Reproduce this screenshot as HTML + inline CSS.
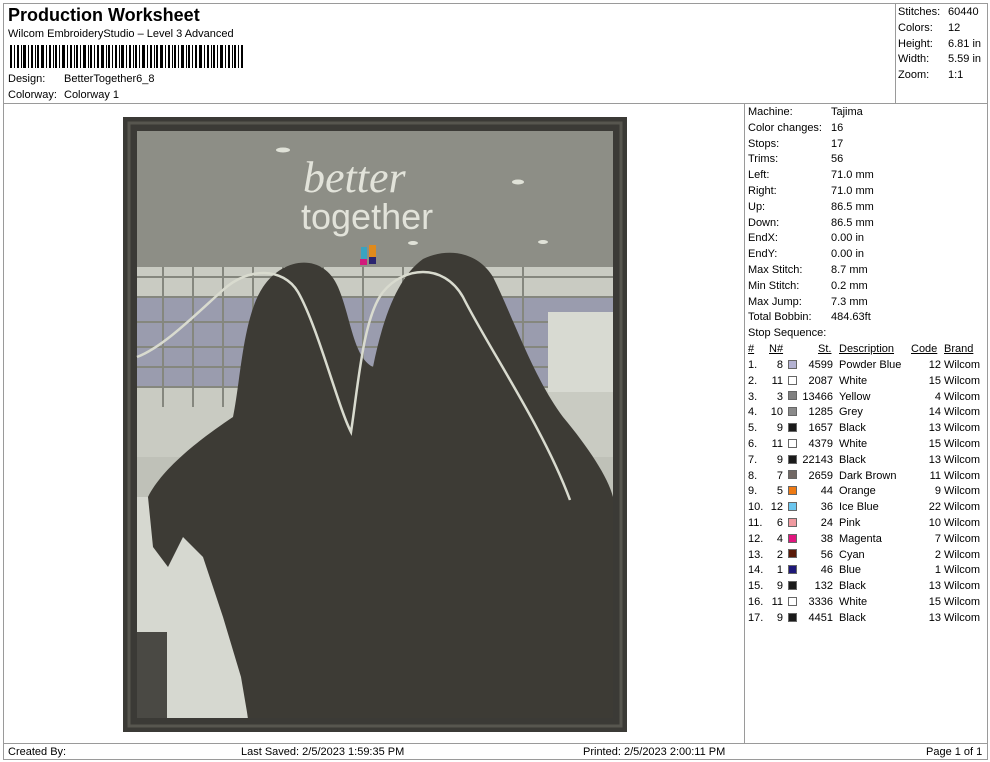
<!DOCTYPE html>
<html><head><meta charset="utf-8"><style>
*{margin:0;padding:0}
body{width:990px;height:762px;background:#fff;position:relative;font-family:"Liberation Sans",Arial,sans-serif;font-size:11px;color:#000;overflow:hidden}
.a{position:absolute;white-space:nowrap}
.l{position:absolute;background:#9a9a9a}
.u{text-decoration:underline}
.sw{position:absolute;width:9px;height:9px;border:1px solid #666;box-sizing:border-box}
</style></head><body>
<div class="l" style="left:3px;top:3px;width:985px;height:1px"></div>
<div class="l" style="left:3px;top:3px;width:1px;height:757px"></div>
<div class="l" style="left:987px;top:3px;width:1px;height:757px"></div>
<div class="l" style="left:3px;top:759px;width:985px;height:1px"></div>
<div class="l" style="left:3px;top:103px;width:985px;height:1px"></div>
<div class="l" style="left:895px;top:3px;width:1px;height:100px"></div>
<div class="l" style="left:744px;top:103px;width:1px;height:640px"></div>
<div class="l" style="left:3px;top:743px;width:985px;height:1px"></div>

<div class="a" style="left:8px;top:5px;font-size:18px;font-weight:bold">Production Worksheet</div>
<div class="a" style="left:8px;top:28px">Wilcom EmbroideryStudio – Level 3 Advanced</div>
<svg class="a" style="left:10px;top:45px" width="234" height="23">
<g fill="#000">
<rect x="0" width="2" height="23"/><rect x="4" width="1" height="23"/><rect x="7" width="2" height="23"/><rect x="11" width="1" height="23"/><rect x="13" width="3" height="23"/><rect x="18" width="1" height="23"/><rect x="21" width="2" height="23"/><rect x="25" width="1" height="23"/><rect x="27" width="2" height="23"/><rect x="31" width="3" height="23"/><rect x="36" width="1" height="23"/><rect x="39" width="2" height="23"/><rect x="43" width="1" height="23"/><rect x="45" width="2" height="23"/><rect x="49" width="1" height="23"/><rect x="52" width="3" height="23"/><rect x="57" width="1" height="23"/><rect x="60" width="2" height="23"/><rect x="64" width="1" height="23"/><rect x="66" width="2" height="23"/><rect x="70" width="1" height="23"/><rect x="73" width="3" height="23"/><rect x="78" width="1" height="23"/><rect x="80" width="2" height="23"/><rect x="84" width="1" height="23"/><rect x="87" width="2" height="23"/><rect x="91" width="3" height="23"/><rect x="96" width="1" height="23"/><rect x="98" width="2" height="23"/><rect x="102" width="1" height="23"/><rect x="105" width="2" height="23"/><rect x="109" width="1" height="23"/><rect x="111" width="3" height="23"/><rect x="116" width="1" height="23"/><rect x="119" width="2" height="23"/><rect x="123" width="1" height="23"/><rect x="125" width="2" height="23"/><rect x="129" width="1" height="23"/><rect x="132" width="3" height="23"/><rect x="137" width="1" height="23"/><rect x="140" width="2" height="23"/><rect x="144" width="1" height="23"/><rect x="146" width="2" height="23"/><rect x="150" width="3" height="23"/><rect x="155" width="1" height="23"/><rect x="158" width="2" height="23"/><rect x="162" width="1" height="23"/><rect x="164" width="2" height="23"/><rect x="168" width="1" height="23"/><rect x="171" width="3" height="23"/><rect x="176" width="1" height="23"/><rect x="178" width="2" height="23"/><rect x="182" width="1" height="23"/><rect x="185" width="2" height="23"/><rect x="189" width="3" height="23"/><rect x="194" width="1" height="23"/><rect x="197" width="2" height="23"/><rect x="201" width="1" height="23"/><rect x="203" width="2" height="23"/><rect x="207" width="1" height="23"/><rect x="210" width="3" height="23"/><rect x="215" width="1" height="23"/><rect x="218" width="2" height="23"/><rect x="222" width="1" height="23"/><rect x="224" width="2" height="23"/><rect x="228" width="1" height="23"/><rect x="231" width="2" height="23"/>
</g></svg>
<div class="a" style="left:8px;top:73px">Design:</div><div class="a" style="left:64px;top:73px">BetterTogether6_8</div>
<div class="a" style="left:8px;top:89px">Colorway:</div><div class="a" style="left:64px;top:89px">Colorway 1</div>

<div class="a" style="left:898px;top:5px;line-height:15.8px">Stitches:<br>Colors:<br>Height:<br>Width:<br>Zoom:</div>
<div class="a" style="left:948px;top:5px;line-height:15.8px">60440<br>12<br>6.81 in<br>5.59 in<br>1:1</div>

<div class="a" style="left:748px;top:105px;line-height:15.8px">Machine:<br>Color changes:<br>Stops:<br>Trims:<br>Left:<br>Right:<br>Up:<br>Down:<br>EndX:<br>EndY:<br>Max Stitch:<br>Min Stitch:<br>Max Jump:<br>Total Bobbin:<br>Stop Sequence:</div>
<div class="a" style="left:831px;top:105px;line-height:15.8px">Tajima<br>16<br>17<br>56<br>71.0 mm<br>71.0 mm<br>86.5 mm<br>86.5 mm<br>0.00 in<br>0.00 in<br>8.7 mm<br>0.2 mm<br>7.3 mm<br>484.63ft</div>

<div class="a u" style="left:748px;top:343px">#</div>
<div class="a u" style="left:769px;top:343px">N#</div>
<div class="a u" style="left:818px;top:343px">St.</div>
<div class="a u" style="left:839px;top:343px">Description</div>
<div class="a u" style="left:911px;top:343px">Code</div>
<div class="a u" style="left:944px;top:343px">Brand</div>
<div class="a" style="left:748px;top:358px;line-height:15.8px">1.<br>2.<br>3.<br>4.<br>5.<br>6.<br>7.<br>8.<br>9.<br>10.<br>11.<br>12.<br>13.<br>14.<br>15.<br>16.<br>17.</div>
<div class="a" style="left:758px;top:358px;line-height:15.8px;width:25px;text-align:right">8<br>11<br>3<br>10<br>9<br>11<br>9<br>7<br>5<br>12<br>6<br>4<br>2<br>1<br>9<br>11<br>9</div>
<div class="a" style="left:795px;top:358px;line-height:15.8px;width:38px;text-align:right">4599<br>2087<br>13466<br>1285<br>1657<br>4379<br>22143<br>2659<br>44<br>36<br>24<br>38<br>56<br>46<br>132<br>3336<br>4451</div>
<div class="a" style="left:839px;top:358px;line-height:15.8px">Powder Blue<br>White<br>Yellow<br>Grey<br>Black<br>White<br>Black<br>Dark Brown<br>Orange<br>Ice Blue<br>Pink<br>Magenta<br>Cyan<br>Blue<br>Black<br>White<br>Black</div>
<div class="a" style="left:915px;top:358px;line-height:15.8px;width:26px;text-align:right">12<br>15<br>4<br>14<br>13<br>15<br>13<br>11<br>9<br>22<br>10<br>7<br>2<br>1<br>13<br>15<br>13</div>
<div class="a" style="left:944px;top:358px;line-height:15.8px">Wilcom<br>Wilcom<br>Wilcom<br>Wilcom<br>Wilcom<br>Wilcom<br>Wilcom<br>Wilcom<br>Wilcom<br>Wilcom<br>Wilcom<br>Wilcom<br>Wilcom<br>Wilcom<br>Wilcom<br>Wilcom<br>Wilcom</div>
<div class="sw" style="left:788px;top:360px;background:#b4b2d2"></div>
<div class="sw" style="left:788px;top:376px;background:#fff"></div>
<div class="sw" style="left:788px;top:391px;background:#808080"></div>
<div class="sw" style="left:788px;top:407px;background:#8a8a8a"></div>
<div class="sw" style="left:788px;top:423px;background:#1a1a1a"></div>
<div class="sw" style="left:788px;top:439px;background:#fff"></div>
<div class="sw" style="left:788px;top:455px;background:#1a1a1a"></div>
<div class="sw" style="left:788px;top:470px;background:#716864"></div>
<div class="sw" style="left:788px;top:486px;background:#ee7a14"></div>
<div class="sw" style="left:788px;top:502px;background:#6cc6ee"></div>
<div class="sw" style="left:788px;top:518px;background:#f09aa0"></div>
<div class="sw" style="left:788px;top:534px;background:#e0157e"></div>
<div class="sw" style="left:788px;top:549px;background:#5a1a08"></div>
<div class="sw" style="left:788px;top:565px;background:#1e1878"></div>
<div class="sw" style="left:788px;top:581px;background:#1a1a1a"></div>
<div class="sw" style="left:788px;top:597px;background:#fff"></div>
<div class="sw" style="left:788px;top:613px;background:#1a1a1a"></div>

<svg class="a" style="left:123px;top:117px" width="504" height="615" viewBox="0 0 504 615">
<rect x="0" y="0" width="504" height="615" fill="#3b3a36"/>
<rect x="6" y="6" width="492" height="603" fill="none" stroke="#57564f" stroke-width="3"/>
<rect x="14" y="14" width="476" height="587" fill="#8d8e86"/>
<rect x="14" y="150" width="476" height="190" fill="#c9cbc2"/>
<rect x="14" y="180" width="476" height="90" fill="#9a9cae"/>
<path d="M14 160 H490 M14 180 H490 M14 205 H490 M14 230 H490 M14 250 H490 M14 270 H490 M40 150V290 M70 150V290 M100 150V290 M130 150V290 M160 150V290 M200 150V290 M240 150V290 M280 150V290 M320 150V290 M360 150V290 M400 150V290" stroke="#85877e" stroke-width="2"/>
<rect x="425" y="195" width="65" height="80" fill="#d8dad2"/>
<rect x="14" y="340" width="476" height="261" fill="#bfc1b8"/>
<rect x="14" y="380" width="110" height="221" fill="#d6d8d0"/>
<rect x="14" y="515" width="30" height="86" fill="#4a4944"/>
<path d="M25 380 C40 350 80 320 110 300 C118 260 120 200 140 170 C160 140 200 135 215 170 C228 200 230 240 250 250 C260 200 275 160 300 142 C325 130 355 135 370 160 C390 200 410 260 440 300 C465 330 485 360 490 380 L490 601 L125 601 L118 560 L100 500 L80 440 L60 420 L45 450 L30 430 Z" fill="#3d3b35"/>
<path d="M14 240 C40 230 70 200 100 173 C125 150 160 150 175 175 C195 210 215 290 228 315 C235 270 240 200 260 175 C280 150 320 145 340 180 C365 230 420 310 447 383" fill="none" stroke="#d9dbcf" stroke-width="2.5"/>
<text x="180" y="75" font-family="Liberation Serif,serif" font-style="italic" font-size="44" fill="#e2e3da">better</text>
<text x="178" y="112" font-family="Liberation Sans,sans-serif" font-size="36" fill="#e2e3da">together</text>
<rect x="238" y="130" width="6" height="12" fill="#3aa3c0"/><rect x="246" y="128" width="7" height="12" fill="#e08a1c"/>
<rect x="237" y="142" width="7" height="6" fill="#d21a7c"/><rect x="246" y="140" width="7" height="7" fill="#2a2470"/>
<ellipse cx="160" cy="33" rx="7" ry="2.5" fill="#e0e2d8"/><ellipse cx="395" cy="65" rx="6" ry="2.5" fill="#e0e2d8"/><ellipse cx="290" cy="126" rx="5" ry="2" fill="#e0e2d8"/><ellipse cx="420" cy="125" rx="5" ry="2" fill="#e0e2d8"/>
</svg>

<div class="a" style="left:8px;top:746px">Created By:</div>
<div class="a" style="left:241px;top:746px">Last Saved: 2/5/2023 1:59:35 PM</div>
<div class="a" style="left:583px;top:746px">Printed: 2/5/2023 2:00:11 PM</div>
<div class="a" style="left:926px;top:746px">Page 1 of 1</div>
</body></html>
